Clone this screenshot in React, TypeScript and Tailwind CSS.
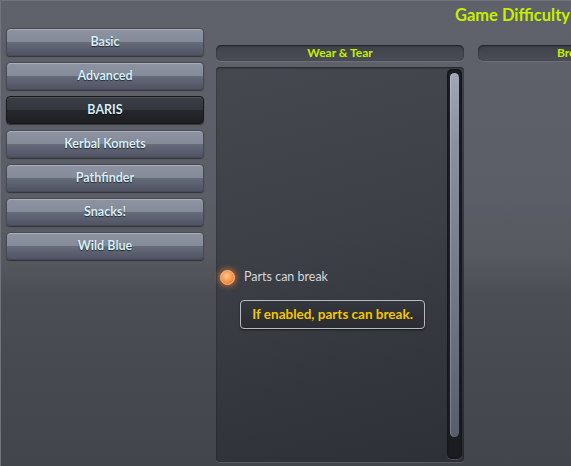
import React from 'react';

const tabs = ['Basic', 'Advanced', 'BARIS', 'Kerbal Komets', 'Pathfinder', 'Snacks!', 'Wild Blue'];

function TabButton({ label, active }: { label: string; active?: boolean }) {
  return (
    <button
      className={`h-[28px] w-full rounded-[4px] border text-[12.5px] font-bold text-[#d6eefa] [text-shadow:0_1px_1px_rgba(0,0,0,0.6)] ${
        active
          ? 'border-[#16181c] bg-[linear-gradient(180deg,#3b3e45_0%,#34373e_48%,#25272c_52%,#1d1f23_100%)] shadow-[inset_0_1px_0_rgba(255,255,255,0.12),0_1px_1px_rgba(0,0,0,0.45)]'
          : 'border-[#474a55] bg-[linear-gradient(180deg,#8e93a2_0%,#868b9a_48%,#666b7a_52%,#4f5363_100%)] shadow-[inset_0_1px_0_rgba(255,255,255,0.25),0_1px_1px_rgba(0,0,0,0.45)]'
      }`}
    >
      {label}
    </button>
  );
}

function SectionHeader({ label }: { label: string }) {
  return (
    <div className="flex h-[16px] items-center justify-center whitespace-nowrap rounded-[5px] bg-[linear-gradient(180deg,#3f4249_0%,#4a4d55_100%)] text-[12px] font-bold leading-none text-[#c4f000] shadow-[inset_0_1px_2px_rgba(0,0,0,0.55),0_1px_0_rgba(255,255,255,0.1)]">
      {label}
    </div>
  );
}

export default function App() {
  return (
    <div
      className="relative flex h-[466px] w-[571px] flex-col overflow-hidden border-l border-t border-[#70737b] bg-[linear-gradient(180deg,#5f626a_0%,#5b5e66_40%,#56595f_55%,#4b4e55_63%,#46494f_80%,#42454c_100%)]"
      style={{ fontFamily: 'Lato, "Noto Sans", sans-serif' }}
    >
      {/* Title */}
      <div className="flex h-[27px] justify-end pr-[1px] pt-[4px]">
        <h1 className="whitespace-nowrap text-[16.5px] font-bold leading-[20px] text-[#c6f000]">Game Difficulty</h1>
      </div>

      <div className="flex flex-1 min-h-0">
        {/* Left tabs */}
        <div className="ml-[5px] flex w-[198px] shrink-0 flex-col gap-[6px]">
          {tabs.map(t => (
            <TabButton key={t} label={t} active={t === 'BARIS'} />
          ))}
        </div>

        {/* Columns */}
        <div className="ml-[12px] flex gap-[14px] pt-[17px]">
          <div className="flex w-[248px] shrink-0 flex-col gap-[6px]">
            <SectionHeader label="Wear & Tear" />
            <div className="relative flex h-[395px] rounded-[4px] bg-[linear-gradient(165deg,#45484f_0%,#3c3f46_45%,#33363c_75%,#2d3036_100%)] shadow-[inset_0_1px_2px_rgba(0,0,0,0.5),0_1px_0_rgba(255,255,255,0.12)]">
              <div className="flex-1 pl-[4px] pt-[201px]">
                <label className="flex items-center gap-[9px]">
                  <span className="h-[15px] w-[15px] shrink-0 rounded-full border border-[#f6c8a0] bg-[radial-gradient(circle_at_45%_40%,#ffd0a0_0%,#ff9a4a_45%,#e0651c_100%)] shadow-[0_0_5px_2px_rgba(255,120,30,0.55)]" />
                  <span className="text-[12.5px] text-[#d4d6dc]">Parts can break</span>
                </label>
              </div>

              {/* Scrollbar */}
              <div className="mb-[3px] mr-[2px] mt-[2px] flex w-[15px] shrink-0 flex-col rounded-[5px] bg-[#1b1d21] px-[3px] pb-[22px] pt-[4px] shadow-[inset_0_0_2px_rgba(0,0,0,0.8),0_1px_0_rgba(255,255,255,0.15)]">
                <div className="flex-1 rounded-full bg-[linear-gradient(180deg,#a1a7b6_0%,#8a90a0_20%,#6c7282_70%,#585d6c_100%)] shadow-[inset_1px_0_0_rgba(255,255,255,0.2)]" />
              </div>

              {/* Tooltip */}
              <div className="absolute left-[24px] top-[233px] flex h-[29px] w-[185px] items-center justify-center whitespace-nowrap rounded-[4px] border border-[#b8bac0] bg-[linear-gradient(180deg,#34373d_0%,#2a2c31_100%)] text-[13.5px] font-bold text-[#f3c700] shadow-[0_1px_2px_rgba(0,0,0,0.6)]">
                If enabled, parts can break.
              </div>
            </div>
          </div>

          <div className="flex w-[248px] shrink-0 flex-col">
            <SectionHeader label="Breaking Ground" />
          </div>
        </div>
      </div>
    </div>
  );
}
